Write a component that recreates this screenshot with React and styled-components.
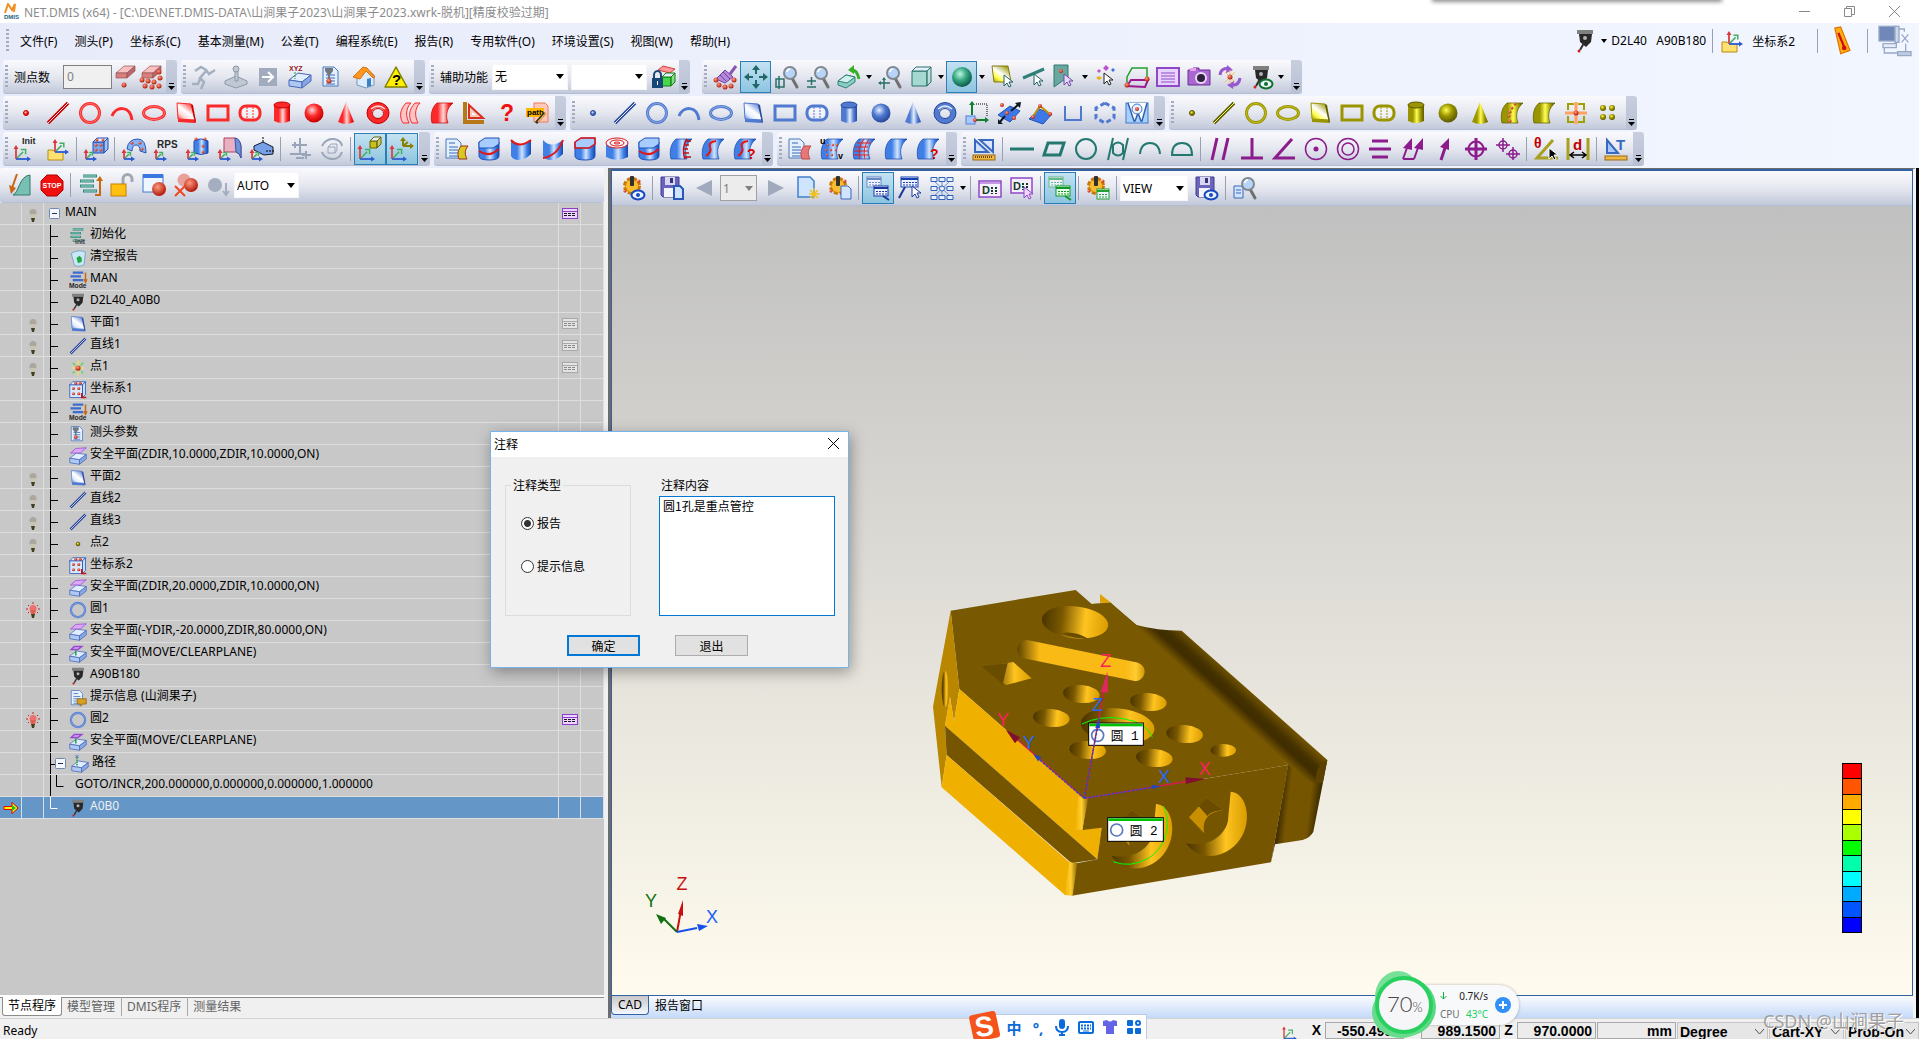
import styled, { createGlobalStyle, css } from "styled-components";
import { useState } from "react";

const GlobalStyle = createGlobalStyle`
  * {
    box-sizing: border-box;
  }
  body {
    margin: 0;
    overflow: hidden;
    font-family: "Noto Sans", "Noto Sans CJK SC", sans-serif;
    font-size: 12px;
    color: #000;
  }
  button, input, select, textarea {
    font-family: inherit;
    font-size: inherit;
    font-weight: inherit;
    color: inherit;
    margin: 0;
  }
`;

// ---------- palettes ----------
const PALETTE = {
  red: { c: "#fb2a2a", d: "#c80000", l: "#ffd8d8" },
  blue: { c: "#5079d0", d: "#28489c", l: "#e4eeff" },
  gold: { c: "#9a9400", d: "#5c5a00", l: "#ffff50" },
  cad: { c: "#3f7fe6", d: "#1548b0", l: "#cfe4ff" },
};

const HiddenSvg = styled.svg`
  display: block;
  flex: none;
`;

const Defs = () => (
  <HiddenSvg width="0" height="0" aria-hidden="true">
    <defs>
      {Object.entries(PALETTE).map(([k, p]) => (
        <g key={k}>
          <linearGradient id={`${k}-h`}>
            <stop offset="0" stopColor={p.c} />
            <stop offset=".3" stopColor={p.c} />
            <stop offset=".55" stopColor={p.l} />
            <stop offset=".8" stopColor={p.c} />
            <stop offset="1" stopColor={p.d} />
          </linearGradient>
          <linearGradient id={`${k}-d`} x1="0" y1="1" x2=".8" y2="0">
            <stop offset="0" stopColor={p.c} />
            <stop offset=".3" stopColor={p.l} />
            <stop offset=".55" stopColor="#fff" />
            <stop offset="1" stopColor={p.c} />
          </linearGradient>
          <radialGradient id={`${k}-r`} cx=".4" cy=".35" r=".65">
            <stop offset="0" stopColor={p.l} />
            <stop offset=".5" stopColor={p.c} />
            <stop offset="1" stopColor={p.d} />
          </radialGradient>
        </g>
      ))}
      <radialGradient id="ball" cx=".4" cy=".35" r=".65">
        <stop offset="0" stopColor="#ff9a80" />
        <stop offset="1" stopColor="#b01808" />
      </radialGradient>
      <radialGradient id="green-r" cx=".4" cy=".35" r=".65">
        <stop offset="0" stopColor="#c0f8e0" />
        <stop offset=".5" stopColor="#38a884" />
        <stop offset="1" stopColor="#0c5c48" />
      </radialGradient>
      <linearGradient id="hole">
        <stop offset="0" stopColor="#4a3400" />
        <stop offset=".3" stopColor="#7a5800" />
        <stop offset=".65" stopColor="#ffc420" />
        <stop offset="1" stopColor="#d89c00" />
      </linearGradient>
      <linearGradient id="slot" gradientUnits="userSpaceOnUse" x1="350" y1="0" x2="735" y2="0">
        <stop offset="0" stopColor="#5a4000" />
        <stop offset=".18" stopColor="#f9ba16" />
        <stop offset=".85" stopColor="#f9ba16" />
        <stop offset=".93" stopColor="#ffcc30" />
        <stop offset="1" stopColor="#d09600" />
      </linearGradient>
      <linearGradient id="slab" gradientUnits="userSpaceOnUse" x1="900" y1="342" x2="960" y2="276">
        <stop offset="0" stopColor="#785800" />
        <stop offset=".35" stopColor="#3f2c00" />
        <stop offset=".6" stopColor="#453200" />
        <stop offset="1" stopColor="#765600" />
      </linearGradient>
      <linearGradient id="side" gradientUnits="userSpaceOnUse" x1="1140" y1="700" x2="1265" y2="715">
        <stop offset="0" stopColor="#3f2c00" />
        <stop offset=".2" stopColor="#755500" />
        <stop offset=".7" stopColor="#755500" />
        <stop offset="1" stopColor="#2c1f00" />
      </linearGradient>
      <linearGradient id="edge">
        <stop offset="0" stopColor="#f0b000" />
        <stop offset=".5" stopColor="#ffcf30" />
        <stop offset="1" stopColor="#8a6400" />
      </linearGradient>
    </defs>
  </HiddenSvg>
);

// ---------- icon parts ----------
const Axes = ({ x = 2, y = 22, s = 10 }) => (
  <g fill="none" strokeWidth="2">
    <path d={`M${x} ${y}l${s * 0.6} ${-s * 0.6}`} stroke="#40b060" strokeWidth="1.5" />
    <path d={`M${x + s * 0.4} ${y - s * 0.8}h${s * 0.4}v${s * 0.4}`} stroke="#40b060" strokeWidth="1.5" />
    <path d={`M${x} ${y}v${-s}`} stroke="#d85050" />
    <path d={`M${x} ${y}h${s}`} stroke="#3a68d0" />
    <path d={`M${x - 2.5} ${y - s + 2}l2.5 -4l2.5 4z`} fill="#d83838" stroke="none" />
    <path d={`M${x + s - 1} ${y - 2.5}l4 2.5l-4 2.5z`} fill="#2858d0" stroke="none" />
  </g>
);
const Dots = ({ pts, r = 2 }) => pts.map(([x, y], i) => <circle key={i} cx={x} cy={y} r={r} fill="url(#ball)" />);
const Cursor = ({ x, y, fill = "#fff", stroke = "#206060" }) => (
  <path d={`M${x} ${y}v11l3 -3l2 4l2 -1l-2 -4h4z`} fill={fill} stroke={stroke} />
);
const Lens = ({ x = 15, y = 8 }) => (
  <g>
    <path d={`M${x + 2} ${y + 5}l5 9`} stroke="#707070" strokeWidth="3" strokeLinecap="round" />
    <circle cx={x} cy={y} r="6" fill="#b8d4f8" stroke="#808890" strokeWidth="2" />
    <path d={`M${x - 3} ${y - 1}a3 3 0 0 1 3 -3`} stroke="#fff" fill="none" strokeWidth="1.5" />
  </g>
);
const Page = ({ x = 3, y = 2 }) => (
  <g>
    <path d={`M${x} ${y}h11l4 4v15h-15z`} fill="#e4f0ff" stroke="#4878b8" />
    <path d={`M${x + 3} ${y + 4}h6M${x + 3} ${y + 8}h9M${x + 3} ${y + 11}h9M${x + 3} ${y + 14}h9M${x + 3} ${y + 17}h9`} stroke="#3868b8" />
  </g>
);
const Disk = () => (
  <g>
    <path d="M1 1h18v20h-16l-2 -2z" fill="#6a64bc" stroke="#443c90" />
    <rect x="5" y="1" width="10" height="8" fill="#d8d8f0" />
    <rect x="10" y="2" width="3" height="5" fill="#38307c" />
    <rect x="4" y="12" width="11" height="9" fill="#f4f4fc" />
  </g>
);
const Gear = () => (
  <g>
    <circle cx="10" cy="10" r="7.5" fill="#f0a818" stroke="#c87808" strokeWidth="3" strokeDasharray="4 2" />
    <circle cx="10" cy="10" r="6" fill="#f8bc30" />
    <rect x="8" y="0" width="4" height="10" rx="1" fill="#303030" />
    <Dots pts={[[3, 15], [17, 5]]} r={1.5} />
  </g>
);
const Eye = ({ x = 16, y = 18, c = "#1848c0" }) => (
  <g>
    <ellipse cx={x} cy={y} rx="6.5" ry="4.5" fill="#e8f4ff" stroke={c} strokeWidth="2" />
    <circle cx={x} cy={y} r="2" fill={c} />
  </g>
);
const Grid = ({ x, y, c = "#1840b0", w = 14, fill = "#eef2ff" }) => (
  <g>
    <rect x={x} y={y} width={w} height="10" fill={fill} stroke={c} />
    <path d={`M${x} ${y + 2}h${w}`} stroke={c} strokeWidth="2" />
    <path d={`M${x + 2} ${y + 5.5}h${w - 3}M${x + 2} ${y + 8}h${w - 3}`} stroke={c} strokeDasharray="2 1" />
  </g>
);
const Question = () => (
  <text x="14" y="22" fontSize="14" fontWeight="700" fontFamily="Liberation Sans, sans-serif" fill="#d80000">?</text>
);
const Tube = ({ children }) => (
  <g>
    <path d="M2 5v14q0 4 10 4t10 -4v-14z" fill="url(#cad-h)" stroke="#1c50b8" />
    <path d="M2 5l6 -4h14v6l-6 4h-14z" fill="#a8ccff" stroke="#1c50b8" />
    {children}
  </g>
);
const Shell = ({ children, k = "cad" }) => (
  <g>
    <path d="M7 2h16c-6 5 -8 12 -5 20h-16c-2 -8 0 -16 5 -20z" fill={`url(#${k}-h)`} stroke={PALETTE[k].d} strokeWidth=".7" />
    {children}
  </g>
);
const Eraser = ({ y = 0 }) => (
  <g stroke="#985050" strokeWidth=".7">
    <path d={`M3 ${y + 8}l8 -7h11l-8 7z`} fill="#f8c0c0" />
    <path d={`M3 ${y + 8}h11v5h-11z`} fill="#d88080" />
    <path d={`M14 ${y + 8}l8 -7v5l-8 7z`} fill="#b86868" />
  </g>
);
const Box = ({ x = 8, y = 2, s = 10, c = "#78a8f0", d = "#1c50b8" }) => (
  <g stroke={d}>
    <path d={`M${x} ${y + 4}h${s}v${s}h${-s}z`} fill={c} />
    <path d={`M${x} ${y + 4}l4 -4h${s}l-4 4z`} fill="#e4f0ff" />
    <path d={`M${x + s} ${y + 4}l4 -4v${s}l-4 4z`} fill={c} fillOpacity=".6" />
  </g>
);
const Probe = () => (
  <g>
    <path d="M4 1h16v4h-16z" fill="#808080" />
    <path d="M6 5h13l-1 8l-5 5l-6 -5z" fill="#282828" />
    <circle cx="12" cy="9" r="2" fill="#b0b0b0" />
    <path d="M11 14l-4 7" stroke="#303030" strokeWidth="2" />
    <circle cx="6" cy="22" r="1.5" fill="#d02020" />
  </g>
);
const Slab = () => (
  <g stroke="#4868b8">
    <path d="M1 15l9 -7l13 2l-9 7z" fill="#e0ecff" />
    <path d="M1 15l13 2v6l-13 -2z" fill="#b0c8f4" />
    <path d="M14 17l9 -7v6l-9 7z" fill="#88a8e4" />
  </g>
);
const Bars = ({ c = "#2c8878" }) => (
  <g>
    <path d="M5 3h14M2 8h14M2 13h14M5 18h14" stroke={c} strokeWidth="3" />
    <path d="M5 3h13M3 8h12M3 13h12M6 18h12" stroke="#a8dcd0" />
  </g>
);
const word = (t, x, y, size, fill) => (
  <text x={x} y={y} fontSize={size} fontWeight="700" fontFamily="Liberation Sans, sans-serif" fill={fill}>{t}</text>
);

const G = "#247870";
const V = "#8c1c8c";

// ---------- icons, all on a 24 x 24 grid ----------
const ICONS = {
  point: (p, k) => <circle cx="12" cy="12" r="2.5" fill={`url(#${k}-r)`} stroke={p.d} />,
  line: (p) => (
    <g>
      <path d="M2 22L22 2" stroke={p.d} strokeWidth="3.5" />
      <path d="M2 22L22 2" stroke={p.l} strokeWidth="1" />
    </g>
  ),
  circle: (p) => (
    <g fill="none">
      <circle cx="12" cy="12" r="9.5" stroke={p.c} strokeWidth="3" />
      <circle cx="12" cy="12" r="9.5" stroke={p.l} strokeWidth=".7" strokeOpacity=".6" />
    </g>
  ),
  arc: (p) => <path d="M2 15C6 5 20 4 22 19" fill="none" stroke={p.c} strokeWidth="3" />,
  ellipse: (p) => (
    <g fill="none">
      <ellipse cx="12" cy="12" rx="10.5" ry="6.5" stroke={p.c} strokeWidth="3" />
      <ellipse cx="12" cy="12" rx="10.5" ry="6.5" stroke={p.l} strokeWidth=".7" strokeOpacity=".6" />
    </g>
  ),
  plane: (p, k) => (
    <g>
      <path d="M3 2l14 1l4 16l-17 -1z" fill={`url(#${k}-d)`} stroke={p.c} />
      <path d="M4 18l17 1v3l-17 -1z" fill={p.c} />
      <path d="M17 3l2 1l3 17l-1 1z" fill={p.d} />
    </g>
  ),
  rect: (p) => <rect x="2" y="5" width="20" height="14" fill="none" stroke={p.c} strokeWidth="3" />,
  slot: (p) => (
    <g fill="none" stroke={p.c}>
      <rect x="2" y="5" width="20" height="14" rx="6" strokeWidth="3" fill="#fff" fillOpacity=".5" />
      <path d="M9 6v12M15 6v12" strokeDasharray="2 1" />
    </g>
  ),
  cylinder: (p, k) => (
    <g>
      <path d="M4 4v16q8 4 16 0v-16z" fill={`url(#${k}-h)`} />
      <ellipse cx="12" cy="4" rx="8" ry="3" fill={p.c} stroke={p.d} />
    </g>
  ),
  sphere: (p, k) => <circle cx="12" cy="12" r="9.5" fill={`url(#${k}-r)`} />,
  cone: (p, k) => <path d="M12 1L4 21q8 4 16 0z" fill={`url(#${k}-h)`} />,
  torus: (p) => (
    <g fill="none">
      <ellipse cx="12" cy="12" rx="8.5" ry="8" stroke={p.c} strokeWidth="5" />
      <ellipse cx="12" cy="12" rx="11" ry="10.5" stroke={p.d} />
      <ellipse cx="12" cy="12.5" rx="5.5" ry="5" stroke={p.d} />
      <path d="M5 8q7 -6 14 0" stroke={p.l} strokeWidth="1.5" />
    </g>
  ),
  strips: (p) => (
    <g fill="#ffc4c4" stroke={p.c}>
      <path d="M8 2h5c-6 6 -5 14 -2 20h-6c-4 -6 -3 -14 3 -20z" />
      <path d="M17 2h5c-6 6 -5 14 -2 20h-6c-4 -6 -3 -14 3 -20z" />
    </g>
  ),
  surface: (p, k) => <Shell k={k} />,
  surfaceDots: (p, k) => (
    <Shell k={k}>
      <Dots pts={[[15, 3], [12, 7], [10, 11], [9, 15], [10, 20]]} r={1.5} />
    </Shell>
  ),
  squareTool: () => (
    <g>
      <path d="M3 1v20h19" fill="none" stroke="#b87818" strokeWidth="4" />
      <path d="M7 4v13h14z" fill="#f8c8b8" stroke="#d83020" strokeWidth="2" />
      <path d="M10 11v3h4z" fill="#fff" />
    </g>
  ),
  help: () => word("?", 6, 20, 23, "#f01010"),
  path: () => (
    <g>
      <path d="M8 2h11l3 3v16h-14z" fill="#ffc8b8" stroke="#f07858" />
      <rect x="0" y="7" width="18" height="9" fill="#ffb800" />
      {word("path", 1, 14, 8, "#000")}
      <path d="M10 22l9 -10" stroke="#303030" strokeWidth="3" />
      <path d="M12 21l8 -9" stroke="#f0b040" strokeWidth="1.5" />
    </g>
  ),
  axisBox: () => (
    <g>
      <rect x="1" y="15" width="9" height="8" fill="#a8c8ff" stroke="#5080d8" />
      <path d="M7 1v13M11 19h11" stroke="#108030" strokeWidth="2" />
      <path d="M4 4l3 -4l3 4zM20 16l4 3l-4 3z" fill="#108030" />
      <path d="M11 3h11v12" fill="none" stroke="#000" strokeDasharray="1 1" />
      <Dots pts={[[10, 19]]} />
    </g>
  ),
  flatA: () => (
    <g>
      <path d="M1 14l12 -9l10 5l-10 11z" fill="#3c78e8" stroke="#2050b8" />
      <path d="M14 10l8 -7M8 15l-6 7" stroke="#101828" strokeWidth="2" />
      <path d="M18 2l6 -1l-1 6zM1 18v5h5z" fill="#101828" />
      <Dots pts={[[5, 4], [10, 12], [17, 17]]} />
    </g>
  ),
  flatB: () => (
    <g>
      <path d="M0 18l10 -10l13 5l-9 10z" fill="#3c78e8" stroke="#2050b8" />
      <path d="M3 17l8 -12l11 9" fill="none" stroke="#c09000" strokeWidth="2" />
      <Dots pts={[[4, 16], [11, 5], [21, 13]]} />
    </g>
  ),
  groove: (p) => <path d="M4 5v14h16v-14" fill="none" stroke={p.c} strokeWidth="2" />,
  hex: (p) => <path d="M12 2l9 5v10l-9 5l-9 -5v-10z" fill="none" stroke={p.c} strokeWidth="3" strokeDasharray="5 3" />,
  funnel: () => (
    <g>
      <rect x="1" y="2" width="22" height="20" fill="#a8d0ff" stroke="#4078c8" />
      <path d="M3 2l6 18h1l3 -8l3 8h1l5 -18" fill="#fff" stroke="#3060b0" strokeWidth="1.5" />
      <circle cx="12" cy="8" r="5" fill="#e8f0ff" stroke="#4078c8" />
      <Dots pts={[[12, 8]]} />
    </g>
  ),
  cross: () => (
    <g fill="none">
      <path d="M4 9v-6h6M14 3h6v6M20 15v6h-6M10 21h-6v-6" stroke="#a0a000" strokeWidth="2" />
      <path d="M12 1v22M1 12h22" stroke="#ffa060" strokeWidth="3" />
      <Dots pts={[[12, 12]]} r={2.5} />
    </g>
  ),
  fourDots: (p, k) => [[7, 7], [16, 7], [7, 16], [16, 16]].map(([x, y]) => <circle key={x + "-" + y} cx={x} cy={y} r="3" fill={`url(#${k}-r)`} />),
  erase: () => (
    <g>
      <Eraser />
      <Dots pts={[[11, 20]]} r={2.5} />
    </g>
  ),
  eraseAll: () => (
    <g>
      <Eraser />
      <Dots pts={[[3, 15], [9, 16], [20, 7], [21, 13], [15, 17], [6, 21], [13, 22], [20, 21]]} r={2.5} />
    </g>
  ),
  runner: () => (
    <g fill="none" stroke="#a4b0c0" strokeWidth="2.5">
      <path d="M3 6l6 -4l5 3l3 4l6 -4M14 6l-6 7l4 4l-3 7M8 14l-2 5h-6" />
    </g>
  ),
  joystick: () => (
    <g fill="#c0c8d4" stroke="#8c98a8">
      <path d="M1 16l11 -5l11 5v3l-11 4l-11 -4z" />
      <path d="M11 5h3v11h-3z" />
      <circle cx="12" cy="4" r="3" />
    </g>
  ),
  next: () => (
    <g>
      <rect x="3" y="3" width="18" height="18" fill="#a0acbe" />
      <path d="M6 12h11M12 7l5 5l-5 5" stroke="#fff" strokeWidth="2" fill="none" />
    </g>
  ),
  xyz: () => (
    <g>
      <Slab />
      {word("XYZ", 1, 6, 7, "#901818")}
      <path d="M7 7v7" stroke="#20a020" strokeDasharray="2 1" />
    </g>
  ),
  report: () => (
    <g>
      <Page />
      <path d="M5 3h8v3l-3 4v5h-2v-5l-3 -4z" fill="#707880" />
      <Dots pts={[[9, 16]]} r={2.5} />
    </g>
  ),
  home: () => (
    <g>
      <path d="M5 11v9l9 3l8 -3v-10l-8 -6z" fill="#dcecfc" stroke="#7898b8" />
      <path d="M1 12l10 -10l4 1l8 9l-2 1l-7 -7l-6 8z" fill="#ff9820" stroke="#d87010" />
      <path d="M15 14l4 -1v8l-4 1z" fill="#3c80c8" />
    </g>
  ),
  warning: () => (
    <g>
      <path d="M12 2L23 22H1z" fill="#ffee00" stroke="#808000" strokeLinejoin="round" strokeWidth="1.5" />
      {word("?", 8, 20, 15, "#000")}
    </g>
  ),
  lock: () => (
    <g>
      <path d="M6 5l5 -4l12 3l-5 4z" fill="#ff9898" stroke="#d04040" />
      <Box x={10} y={8} s={9} c="#48d848" d="#108010" />
      <path d="M2 14v-4a3.5 4 0 0 1 7 0v4" stroke="#184878" strokeWidth="2" fill="none" />
      <rect x="0" y="13" width="11" height="10" fill="#184878" />
      <rect x="5" y="16" width="1" height="4" fill="#fff" />
    </g>
  ),
  broom: () => (
    <g>
      <path d="M23 1l-6 8" stroke="#8858b0" strokeWidth="3" />
      <path d="M12 5l8 7l-8 6l-9 -4z" fill="#b888dc" stroke="#7040a0" />
      <path d="M10 7l7 7M7 10l6 6" stroke="#7040a0" />
      <Dots pts={[[3, 15], [6, 20], [12, 22], [18, 21], [21, 15]]} r={2.5} />
    </g>
  ),
  move: () => (
    <path d="M12 0l4 5h-3v4h-2v-4h-3zM12 24l4 -5h-3v-4h-2v4h-3zM0 12l5 -4v3h4v2h-4v3zM24 12l-5 -4v3h-4v2h4v3z" fill="#206868" />
  ),
  zoomRect: () => (
    <g>
      <Lens />
      <path d="M1 14h8v8h-8zM4 11v13" stroke="#287068" strokeWidth="1.5" fill="none" />
    </g>
  ),
  zoomPlus: () => (
    <g>
      <Lens />
      <path d="M1 16h9M5.5 12v8M1 22h9" stroke="#287068" strokeWidth="1.5" />
    </g>
  ),
  rotate: () => (
    <g>
      <path d="M1 16l8 -6l9 2v5l-9 6l-8 -3z" fill="#88ccc4" stroke="#308078" />
      <path d="M1 16l8 -6l9 2l-8 6z" fill="#d0f0ec" stroke="#308078" />
      <path d="M14 5q6 -1 8 9" fill="none" stroke="#38b028" strokeWidth="3" />
      <path d="M11 5l6 -5v9z" fill="#38b028" />
    </g>
  ),
  zoomMove: () => (
    <g>
      <Lens />
      <path d="M1 18h11M6 13v11" stroke="#287068" strokeWidth="1.5" />
      <path d="M4 15l2 -3l2 3zM3 16l-3 2l3 2z" fill="#287068" />
    </g>
  ),
  cube: () => <Box x={3} y={2} s={15} c="#a4d8d0" d="#287068" />,
  shade: () => <circle cx="12" cy="12" r="10" fill="url(#green-r)" />,
  pickFace: () => (
    <g>
      <path d="M1 1h16l3 16h-17z" fill="url(#gold-d)" stroke="#807c10" />
      <Cursor x={13} y={10} />
    </g>
  ),
  pickEdge: () => (
    <g>
      <path d="M1 13L22 4" stroke="#308078" strokeWidth="3" />
      <Cursor x={12} y={9} />
    </g>
  ),
  pickPoint: () => (
    <g>
      <path d="M1 0h14v12l-14 10z" fill="#68a8a0" stroke="#307870" />
      <Dots pts={[[8, 6]]} />
      <Cursor x={11} y={9} fill="#e8d8ff" stroke="#7048a0" />
    </g>
  ),
  pickAny: () => (
    <g>
      <Cursor x={10} y={8} stroke="#202020" />
      <path d="M12 0l3 3l-3 3l-3 -3zM5 4l2 2l-2 2l-2 -2z" fill="#c050d0" />
      <path d="M19 3l2 2l-2 2l-2 -2z" fill="#4070e0" />
      <path d="M5 11l3 2l-3 2l-3 -2z" fill="#e8b020" />
    </g>
  ),
  frame: () => (
    <g fill="none">
      <path d="M2 21v-9l5 -9h15v9" stroke="#20a030" strokeWidth="1.5" />
      <path d="M2 21l4 -6h17l-3 7z" stroke="#a01890" strokeWidth="2" />
      <Dots pts={[[2, 20], [22, 14]]} r={2.5} />
    </g>
  ),
  listBox: () => (
    <g>
      <rect x="1" y="3" width="22" height="18" fill="#e8d4ff" stroke="#9048c8" strokeWidth="2" />
      <path d="M5 8h14M5 11h14M5 14h14M5 17h14" stroke="#9048c8" />
    </g>
  ),
  camera: () => (
    <g>
      <path d="M1 5h5v-2h6v2h11v15h-22z" fill="#a868d0" stroke="#6c2c98" />
      <rect x="3" y="3" width="6" height="3" fill="#e8a0f0" />
      <circle cx="14" cy="13" r="6" fill="#e8d8f4" />
      <circle cx="14" cy="13" r="4" fill="#302040" />
    </g>
  ),
  spinXY: () => (
    <g fill="none">
      <path d="M2 10q1 -8 10 -6M22 13q-1 8 -9 7" stroke="#9858d0" strokeWidth="3" />
      <path d="M9 0l6 5l-7 3zM15 24l-6 -4l7 -4z" fill="#9858d0" />
      <path d="M7 7l10 10M17 7l-10 10M12 5v14" stroke="#f8c060" />
      <Dots pts={[[12, 12]]} r={2.5} />
    </g>
  ),
  probeEye: () => (
    <g>
      <Probe />
      <Eye x={17} y={19} c="#107028" />
    </g>
  ),
  probe: () => <Probe />,
  axes: () => <Axes x={4} s={14} />,
  init: () => (
    <g>
      <Axes s={12} />
      {word("Init", 8, 7, 9, "#282828")}
    </g>
  ),
  csOpen: () => (
    <g>
      <path d="M2 23v-10h5l2 2h8v8z" fill="#ffe070" stroke="#b88c10" />
      <Axes x={9} y={15} s={11} />
    </g>
  ),
  csBox: () => (
    <g>
      <Box x={9} y={1} s={11} />
      <Dots pts={[[13, 3], [19, 3], [12, 8], [17, 8], [12, 13], [17, 13]]} r={1.5} />
      <Axes s={8} />
    </g>
  ),
  csArc: () => (
    <g>
      <path d="M5 12q1 -10 11 -10q8 0 8 14l-6 -2q0 -6 -4 -6t-4 6z" fill="#88b4f4" stroke="#2858b8" />
      <Dots pts={[[10, 6], [18, 6], [20, 12]]} r={1.5} />
      <Axes s={8} />
    </g>
  ),
  rps: () => (
    <g>
      <Axes s={8} />
      {word("RPS", 3, 11, 10, "#282828")}
    </g>
  ),
  csCyl: () => (
    <g>
      <path d="M8 4q6 -4 14 0v12q-7 3 -14 0z" fill="url(#cad-h)" stroke="#1c50b8" />
      <Dots pts={[[10, 2], [19, 2], [17, 9], [17, 15]]} r={1.5} />
      <Axes s={8} />
    </g>
  ),
  csHalf: () => (
    <g>
      <path d="M6 1h11q5 1 6 8v12q-1 -5 -5 -6h-12z" fill="#e8b0c0" stroke="#b04060" />
      <path d="M17 1q5 1 6 8v12q-1 -5 -5 -6z" fill="#7090d8" stroke="#3058b0" />
      <Axes s={8} />
    </g>
  ),
  csPlate: () => (
    <g>
      <path d="M4 9l9 -4l10 5v7l-9 1l-10 -5z" fill="#78a0e8" stroke="#101828" />
      <path d="M13 0v6M16 14h8" stroke="#000" strokeDasharray="2 1" />
      <Axes s={8} />
    </g>
  ),
  csScale: () => <path d="M12 1v15M4 8h15M2 17h16M8 21h8M18 14v8M14 18h9M7 5v6" stroke="#98a4b8" strokeWidth="2" fill="none" />,
  csSpin: () => (
    <g fill="none" stroke="#98a4b8" strokeWidth="2">
      <path d="M2 9q4 -8 12 -7q7 1 8 7M22 15q-3 8 -11 7q-7 -1 -9 -7" />
      <path d="M8 10h7v6h-7zM8 10l3 -3h6v6l-2 3" strokeWidth="1" />
    </g>
  ),
  csView: () => (
    <g>
      <Axes s={12} />
      <Box x={12} y={0} s={7} c="#c8c020" d="#686400" />
    </g>
  ),
  csView2: () => (
    <g>
      <Axes s={12} />
      <path d="M13 9v-7M13 9h8M13 9l5 -4" stroke="#888000" strokeWidth="2" />
      <path d="M10 4l3 -4l3 4zM20 6l4 3l-4 3z" fill="#888000" />
    </g>
  ),
  cadReport: (p, k) => (
    <g>
      <Page x={1} />
      <path d="M16 9h7c-4 5 -3 9 -1 13h-8c-2 -5 -1 -9 2 -13z" fill={k === "gold" ? "#d8c820" : "#e87878"} stroke={k === "gold" ? "#a03010" : "#c04848"} />
    </g>
  ),
  cad1: () => <Tube><path d="M2 14q7 5 14 2l6 -4" fill="none" stroke="#e01818" strokeWidth="2" /></Tube>,
  cad2: () => (
    <g>
      <path d="M2 3q8 9 20 0v14q-6 6 -12 6t-8 -4z" fill="url(#cad-h)" />
      <path d="M2 3q8 9 20 0" fill="none" stroke="#e01818" strokeWidth="2" />
    </g>
  ),
  cad3: () => (
    <g>
      <path d="M2 3q8 9 20 0v14q-6 6 -12 6t-8 -4z" fill="url(#cad-h)" />
      <path d="M2 21q14 -2 20 -18" fill="none" stroke="#e01818" strokeWidth="2" />
    </g>
  ),
  cad4: () => <Tube><path d="M2 5l6 -4h14v6l-6 4h-14z" fill="none" stroke="#e01818" strokeWidth="1.5" /></Tube>,
  cad5: () => (
    <g>
      <path d="M1 6v14q11 6 22 0v-14z" fill="url(#cad-h)" />
      <ellipse cx="12" cy="6" rx="11" ry="5" fill="#f4f8ff" stroke="#e01818" />
      <ellipse cx="12" cy="6" rx="7" ry="3" fill="none" stroke="#e01818" />
      <ellipse cx="12" cy="6" rx="3" ry="1" fill="none" stroke="#e01818" />
    </g>
  ),
  cad7: () => <Shell><path d="M18 2q-6 9 -2 20M16 4h6M15 8h5M14 12h5M14 16h6M15 20h7" stroke="#c01010" strokeWidth="1.5" fill="none" /></Shell>,
  cad8: () => <Shell><path d="M15 4q-8 1 -6 6t-4 9" fill="none" stroke="#e01818" strokeWidth="2" /></Shell>,
  cad9: () => <Shell><path d="M15 4q-8 1 -6 6t-4 9" fill="none" stroke="#e01818" strokeWidth="2" /><Question /></Shell>,
  uv: () => (
    <Shell>
      <Dots pts={[[8, 8], [13, 8], [17, 8], [6, 13], [11, 13], [16, 13], [7, 18], [12, 18]]} r={1.2} />
      {word("u", 0, 7, 9, "#000")}
      {word("v", 18, 22, 9, "#000")}
    </Shell>
  ),
  mesh: () => <Shell><path d="M5 6h14M3 10h13M2 14h14M2 18h15M12 2q-7 9 -4 20M17 2q-7 9 -4 20" stroke="#e02020" fill="none" /></Shell>,
  shell: () => <Shell />,
  shellQ: () => <Shell><Question /></Shell>,
  ruler: () => (
    <g>
      <path d="M3 3v12h13z" fill="#d0e0ff" stroke="#3868c0" strokeWidth="2" />
      <path d="M8 3h13v12z" fill="#d0e0ff" fillOpacity=".6" stroke="#3868c0" strokeWidth="2" />
      <rect x="1" y="18" width="22" height="5" fill="#f0b840" stroke="#986818" />
      <path d="M3 20h18" stroke="#704808" strokeDasharray="1 1" strokeWidth="2" />
    </g>
  ),
  rulerT: () => (
    <g>
      <path d="M3 3l11 13h-11z" fill="#a8c8ff" stroke="#3868c0" strokeWidth="2" />
      {word("T", 12, 13, 15, "#3868c0")}
      <rect x="1" y="19" width="22" height="4" fill="#f0b840" stroke="#986818" />
    </g>
  ),
  straight: () => <path d="M0 12h24" stroke={G} strokeWidth="3" />,
  flat: () => <path d="M6 6h16l-4 12h-16z" fill="none" stroke={G} strokeWidth="3" />,
  round: () => <circle cx="12" cy="12" r="10" fill="none" stroke={G} strokeWidth="2" />,
  cylindric: () => <path d="M7 1l-5 22M22 1l-5 22M7 8q5 -5 10 0v8q-5 5 -10 0z" fill="none" stroke={G} strokeWidth="2" />,
  profileL: () => <path d="M2 17q1 -11 10 -11t10 11" fill="none" stroke={G} strokeWidth="2" />,
  profileS: () => <path d="M2 18q0 -12 10 -12t10 12z" fill="none" stroke={G} strokeWidth="2" />,
  parallel: () => <path d="M9 1l-5 22M20 1l-5 22" stroke={V} strokeWidth="3" />,
  perp: () => <path d="M1 21h22M12 1v20" stroke={V} strokeWidth="3" />,
  angle: () => <path d="M20 2l-17 19h20" fill="none" stroke={V} strokeWidth="3" />,
  concentric: () => (
    <g>
      <circle cx="12" cy="12" r="10.5" fill="none" stroke={V} strokeWidth="1.5" />
      <circle cx="12" cy="12" r="2.5" fill={V} />
    </g>
  ),
  coaxial: () => (
    <g fill="none" stroke={V} strokeWidth="1.5">
      <circle cx="12" cy="12" r="10.5" />
      <circle cx="12" cy="12" r="6" />
    </g>
  ),
  symmetry: () => <path d="M4 4h16M1 12h22M4 20h16" stroke={V} strokeWidth="3" />,
  runout2: () => (
    <g>
      <path d="M3 22l5 -14M14 22l5 -14M3 22h11" stroke={V} strokeWidth="2" />
      <path d="M3 11l9 -10v12zM14 11l9 -10v12z" fill={V} />
    </g>
  ),
  runout: () => (
    <g>
      <path d="M9 23l5 -15" stroke={V} strokeWidth="3" />
      <path d="M8 10l9 -9v12z" fill={V} />
    </g>
  ),
  position: () => (
    <g fill="none" stroke={V} strokeWidth="3">
      <circle cx="12" cy="12" r="7.5" strokeWidth="2" />
      <path d="M12 1v22M1 12h22" />
    </g>
  ),
  positions: () => (
    <g fill="none" stroke={V} strokeWidth="1.5">
      <circle cx="7" cy="8" r="4" />
      <path d="M7 1v14M0 8h14M17 10v13M10 17h14" />
      <circle cx="17" cy="17" r="4" />
    </g>
  ),
  theta: () => (
    <g>
      <path d="M19 3l-16 18h21" fill="none" stroke="#a8a020" strokeWidth="3" />
      {word("θ", 0, 11, 14, "#c00000")}
      <Cursor x={15} y={11} fill="#000" stroke="#fff" />
    </g>
  ),
  dist: () => (
    <g>
      <path d="M2 1v22M22 1v22" stroke="#a8a020" strokeWidth="3" />
      {word("d", 7, 13, 15, "#c00000")}
      <path d="M5 18h14M8 15l-4 3l4 3M16 15l4 3l-4 3" stroke="#000" fill="none" strokeWidth="1.5" />
    </g>
  ),
  exec: () => (
    <g>
      <path d="M5 22c6 -2 6 -19 17 -20v20z" fill="#78c0b4" stroke="#307868" />
      <path d="M9 1l-5 14" stroke="#c86810" strokeWidth="2" />
      <path d="M1 12l2 9l5 -6z" fill="#c86810" />
    </g>
  ),
  stop: () => (
    <g>
      <path d="M7 2h10l6 6v9l-6 6h-10l-6 -6v-9z" fill="#f01010" stroke="#b00000" />
      <text x="12" y="15" textAnchor="middle" fontSize="7" fontWeight="700" fill="#fff" fontFamily="Liberation Sans, sans-serif">STOP</text>
    </g>
  ),
  steps: () => (
    <g>
      <Bars />
      <path d="M17 22h5v-16" stroke="#c86810" strokeWidth="2" fill="none" />
      <path d="M18 8l4 -5l3 5z" fill="#c86810" />
    </g>
  ),
  unlock: () => (
    <g>
      <path d="M13 11v-5a4.5 4.5 0 0 1 9 0v3" stroke="#a0a8b0" strokeWidth="3" fill="none" />
      <rect x="1" y="11" width="15" height="12" fill="#ffc010" stroke="#c88000" />
    </g>
  ),
  winBall: () => (
    <g>
      <rect x="1" y="2" width="20" height="17" fill="#f0f6ff" stroke="#4078d0" />
      <rect x="1" y="1" width="20" height="4" fill="#3878e0" />
      <circle cx="17" cy="16" r="7" fill="url(#ball)" />
    </g>
  ),
  ballDel: () => (
    <g>
      <circle cx="10" cy="7" r="6.5" fill="#e8a098" />
      <circle cx="17" cy="12" r="7" fill="url(#ball)" />
      <path d="M1 13l10 10M11 13l-10 10" stroke="#f04820" strokeWidth="2" />
    </g>
  ),
  ballDown: () => (
    <g>
      <circle cx="9" cy="12" r="7" fill="#a4aec0" />
      <path d="M20 10v11M17 18l3 4l3 -4" stroke="#a4aec0" strokeWidth="2" fill="none" />
    </g>
  ),
  gearEye: () => <g><Gear /><Eye y={19} /></g>,
  gearPage: () => <g><Gear /><path d="M13 10h7l3 3v10h-10z" fill="#d0e4ff" stroke="#3868b8" /></g>,
  gearGrid: () => <g><Gear /><Grid x={11} y={13} w={12} c="#20a030" /></g>,
  diskPage: () => <g><Disk /><path d="M14 10h6l3 3v10h-9z" fill="#d0e4ff" stroke="#2858b8" strokeWidth="2" /></g>,
  diskEye: () => <g><Disk /><Eye y={19} /></g>,
  prev: () => <path d="M20 4v16l-16 -8z" fill="#a0aabc" />,
  fwd: () => <path d="M4 4v16l16 -8z" fill="#a0aabc" />,
  newPage: () => (
    <g>
      <path d="M2 1h12l4 4v16h-16z" fill="#cfe4ff" stroke="#4080d0" strokeWidth="1.5" />
      <path d="M18 12v11M13 18h11M14 14l8 8M22 14l-8 8" stroke="#f0c020" strokeWidth="1.5" />
    </g>
  ),
  grids: () => <g><Grid x={1} y={1} c="#6888c8" /><Grid x={8} y={10} c="#1838a0" /><path d="M17 20l6 4" stroke="#1838a0" strokeWidth="2" /></g>,
  gridCursor: () => <g><Grid x={3} y={1} w={17} /><path d="M1 22l6 -11" stroke="#1838a0" strokeWidth="2" /><Cursor x={14} y={10} stroke="#1838a0" /></g>,
  gridStar: () => (
    <g fill="#e8f0ff" stroke="#3060b8">
      <path d="M4 5l16 15M20 5l-16 15M12 4v18M4 12h16" stroke="#6890d0" />
      <path d="M1 1.5h6v4h-6zM9 1.5h6v4h-6zM17 1.5h6v4h-6zM1 10.5h6v4h-6zM17 10.5h6v4h-6zM1 19.5h6v4h-6zM9 19.5h6v4h-6zM17 19.5h6v4h-6z" />
      <circle cx="12" cy="12.5" r="2.5" />
    </g>
  ),
  dTable: () => <g><rect x="1" y="5" width="22" height="16" fill="#f8eeff" stroke="#9048c8" strokeWidth="1.5" /><path d="M1 7h22" stroke="#9048c8" />{word("D", 4, 18, 11, "#104020")}<path d="M14 11v7M18 11v7" stroke="#104020" strokeDasharray="2 1" strokeWidth="2" /></g>,
  dTableCursor: () => <g><rect x="1" y="2" width="21" height="15" fill="#f8eeff" stroke="#9048c8" strokeWidth="1.5" />{word("D", 3, 14, 11, "#104020")}<path d="M13 7v7M17 7v7" stroke="#104020" strokeDasharray="2 1" strokeWidth="2" /><Cursor x={14} y={11} fill="#f0d8ff" stroke="#9048c8" /></g>,
  gridsGreen: () => <g><Grid x={1} y={1} c="#68b888" /><Grid x={8} y={10} c="#109828" fill="#e8ffe8" /><path d="M17 20l6 4" stroke="#109828" strokeWidth="2" /></g>,
  pageLens: () => <g><path d="M1 10h7l2 2v10h-9z" fill="#d0e4ff" stroke="#3868b8" /><path d="M3 14h5M3 17h5" stroke="#3868b8" /><Lens /></g>,
  thermo: () => <g><path d="M5 1l5 -1l8 20l-8 3z" fill="#ffb010" stroke="#e07000" /><path d="M8 5l5 12" stroke="#d01010" strokeWidth="2" /><circle cx="13" cy="18" r="2" fill="#d01010" /></g>,
  computer: () => (
    <g stroke="#98a8c8">
      <rect x="0" y="1" width="12" height="11" fill="#7088b8" />
      <rect x="12" y="1" width="3" height="12" fill="#d0d8e8" />
      <path d="M3 14h10v3h-10z" fill="#e8ecf4" />
      <path d="M17 7l5 6M22 7l-5 6M19 5v-2h-4M20 14v6M4 17v4h10" fill="none" />
      <path d="M14 20h10v3h-10z" fill="#c0cce0" />
    </g>
  ),
  tInit: () => <g><Bars />{word("Init", 8, 23, 9, "#404040")}</g>,
  tBin: () => <g><path d="M3 6q9 -6 19 -2l-2 17q-8 4 -13 0z" fill="#c8e8f8" stroke="#6898b8" /><path d="M10 12l4 -3l3 3v5l-5 2z" fill="#20a840" /></g>,
  tMode: () => <g><path d="M5 2h14M2 7h14M5 12h14" stroke="#3c6cd0" strokeWidth="3" /><path d="M22 2v12M20 11l2 4l2 -4" stroke="#c86810" strokeWidth="2" fill="none" />{word("Mode", 0, 23, 9, "#282828")}</g>,
  tStar: () => <g><path d="M12 2v20M4 12h16" stroke="#f0e060" strokeWidth="2" /><path d="M5 5l14 14M19 5l-14 14" stroke="#60d860" strokeWidth="2" strokeDasharray="5 3" /><Dots pts={[[12, 12]]} r={3.5} /></g>,
  tCs: () => <g><Box x={1} y={1} s={17} c="#d8e8ff" /><Dots pts={[[9, 3], [15, 3], [6, 10], [13, 10], [6, 17], [13, 17]]} /><path d="M17 16v6h6" stroke="#c81010" strokeWidth="2" fill="none" /></g>,
  tSafe: () => <g><Slab /><path d="M2 8l7 -6l14 -1l-8 7z" fill="#dca8f8" stroke="#9848d0" /></g>,
  tSafeMove: () => <g><Slab /><path d="M3 6l4 -4h10l-5 4z" fill="#dca8f8" stroke="#9848d0" strokeWidth="2" /><path d="M9 7v7" stroke="#20a040" strokeWidth="2" /></g>,
  tNote: () => <g><Page /><path d="M11 13h12v7h-5l-3 3v-3h-4z" fill="#d8a020" stroke="#906010" /></g>,
  tRoute: () => <g><Slab /><path d="M8 3v11" stroke="#20a040" strokeWidth="2" strokeDasharray="2 1" /><path d="M6 0l4 4M10 0l-4 4" stroke="#3060c0" /></g>,
};

const IconSvg = styled.svg`
  display: block;
  flex: none;
  overflow: visible;
`;

// the name may carry a palette: "circle:red"
const Icon = ({ name, size = 24 }) => {
  const [id, k = "blue"] = name.split(":");
  return (
    <IconSvg width={size} height={size} viewBox="0 0 24 24" aria-hidden="true">
      {ICONS[id](PALETTE[k], k)}
    </IconSvg>
  );
};

// ---------- window frame ----------
const Window = styled.div`
  display: flex;
  flex-direction: column;
  height: 100vh;
  overflow: hidden;
  background: linear-gradient(90deg, #e8ebfa, #f2f6ff);
`;
const TitleBar = styled.header`
  display: flex;
  align-items: center;
  flex: none;
  height: 23px;
  padding: 0 19px 0 3px;
  gap: 4px;
  background: #fff;
  color: #8c8c8c;
`;
const Title = styled.h1`
  flex: 1;
  margin: 0;
  font-size: 12px;
  font-weight: 400;
  white-space: nowrap;
`;
const WindowButton = styled.button`
  display: flex;
  padding: 0;
  border: 0;
  margin-left: 30px;
  background: none;
`;
const TopShadow = styled.div`
  position: absolute;
  top: -6px;
  left: 1434px;
  width: 286px;
  height: 6px;
  box-shadow: 0 0 4px 2px #909090;
`;
const MenuBar = styled.nav`
  display: flex;
  align-items: center;
  flex: none;
  height: 37px;
  padding: 0 8px 2px 4px;
`;
const Grip = styled.span`
  flex: none;
  align-self: center;
  width: 3px;
  height: 24px;
  margin: 0 2px;
  background: repeating-linear-gradient(#a4acc4 0 2px, transparent 2px 4px);
`;
const MenuItem = styled.button`
  padding: 0 8px 0 9px;
  border: 0;
  background: none;
  white-space: nowrap;
`;
const MenuStatus = styled.div`
  display: flex;
  align-items: center;
  gap: 8px;
  margin-left: auto;
`;
const StatusGroup = styled.div`
  display: flex;
  align-items: center;
  gap: 4px;
  white-space: nowrap;
  padding-right: ${(p) => p.$pad || 0}px;
`;
const Rows = styled.div`
  display: flex;
  flex-direction: column;
  flex: none;
  gap: 2px;
  padding: 0 3px 2px;
`;
const Row = styled.div`
  display: flex;
  gap: 4px;
`;

// ---------- toolbar ----------
const Bar = styled.div`
  display: flex;
  align-items: center;
  flex: none;
  height: 34px;
  margin-left: ${(p) => p.$indent || 0}px;
  border-radius: 3px;
  background: linear-gradient(#fafafd, #e6e8f0 50%, #c2c9da);
  border-bottom: 1px solid #b4bed2;
`;
const Tool = styled.button`
  display: flex;
  align-items: center;
  justify-content: center;
  gap: 2px;
  flex: none;
  width: ${(p) => p.$w}px;
  height: 32px;
  padding: 0;
  border: 0;
  background: none;
  ${(p) =>
    p.$active &&
    css`
      border: 1px solid #2c7fb4;
      background: linear-gradient(#c4e2f2, #8cc4e0);
    `}
`;
const ToolArrow = styled.button`
  flex: none;
  width: 10px;
  padding: 0;
  border: 0;
  background: none;
  line-height: 0;
`;
const Separator = styled.span`
  flex: none;
  width: 1px;
  height: 24px;
  margin: 0 3px 0 2px;
  background: #98a0b4;
`;
const Overflow = styled.button`
  display: flex;
  align-items: flex-end;
  justify-content: center;
  align-self: stretch;
  flex: none;
  width: 11px;
  margin-left: ${(p) => p.$gap ?? 1}px;
  padding: 0 0 3px;
  border: 0;
  border-radius: 0 3px 3px 0;
  background: linear-gradient(#c8cede, #b8c1d5);
`;
const Label = styled.label`
  padding: 0 4px;
  white-space: nowrap;
`;
const CountInput = styled.input`
  width: 49px;
  height: 24px;
  margin: 0 1px 0 9px;
  padding: 0 3px;
  border: 1px solid #808080;
  background: #f0f0f0;
  color: #808080;
`;
const Combo = styled.span`
  display: grid;
  align-items: center;
  flex: none;
  width: ${(p) => p.$w}px;
  height: 26px;
  margin-right: 3px;
  border: 1px solid ${(p) => (p.$off ? "#a0a0a0" : "#f4f6fa")};
  background: ${(p) => (p.$off ? "#ececec" : "#fff")};
  color: ${(p) => (p.$off ? "#808080" : "#000")};
  > * {
    grid-area: 1 / 1;
  }
  svg {
    justify-self: end;
    margin-right: 3px;
    pointer-events: none;
  }
`;
const Select = styled.select`
  appearance: none;
  width: 100%;
  height: 100%;
  padding: 0 2px;
  border: 0;
  background: none;
  opacity: 1;
`;

const Down = ({ c = "#000" }) => (
  <svg width="8" height="5" aria-hidden="true">
    <path d="M0 0h8l-4 5z" fill={c} />
  </svg>
);
const SmallDown = () => (
  <svg width="6" height="4" aria-hidden="true">
    <path d="M0 0h6l-3 4z" />
  </svg>
);

const ComboBox = ({ label, value, w, off }) => (
  <Combo $w={w} $off={off}>
    <Select aria-label={label} disabled={off} defaultValue={value}>
      <option>{value}</option>
    </Select>
    <Down c={off ? "#808080" : "#000"} />
  </Combo>
);

// "|" is a separator, a leading "*" is a pressed button, a trailing ">" adds a drop-down arrow
const Tools = ({ items, w = 32 }) =>
  items.split(" ").map((raw, i) => {
    if (raw === "|") return <Separator key={i} />;
    const name = raw.replace(/[*>]/g, "");
    const tool = (
      <Tool key={i} $w={w} $active={raw[0] === "*"} aria-label={name}>
        <Icon name={name} />
      </Tool>
    );
    if (!raw.endsWith(">")) return tool;
    return [
      tool,
      <ToolArrow key={i + "a"} aria-label={name + " options"}>
        <SmallDown />
      </ToolArrow>,
    ];
  });

const ToolBar = ({ items, w, indent, gap, children }) => (
  <Bar $indent={indent}>
    <Grip />
    {children}
    {items && <Tools items={items} w={w} />}
    <Overflow $gap={gap} aria-label="toolbar options">
      <svg width="7" height="7" aria-hidden="true">
        <path d="M1 0h5v1h-5zM0 3h7l-3.5 4z" />
      </svg>
    </Overflow>
  </Bar>
);

const shapes = (k, names) => names.split(" ").map((n) => `${n}:${k}`).join(" ");

// ---------- panes ----------
const Panes = styled.main`
  display: grid;
  grid-template-columns: minmax(400px, 604px) 1fr;
  gap: 4px;
  flex: 1;
  min-height: 0;
  background: #f0f0f0;
`;
const LeftPane = styled.section`
  display: flex;
  flex-direction: column;
  min-height: 0;
`;
const LeftBar = styled(Bar)`
  height: 35px;
  padding-left: 4px;
  border-bottom: 1px solid #b4c0d8;
`;
const Tree = styled.div`
  flex: 1;
  min-height: 0;
  overflow: hidden;
  background: #c8c8c8;
`;
const TreeRow = styled.div`
  display: grid;
  grid-template-columns: 22px 22px 1fr 22px 24px;
  height: 22px;
  border-bottom: 1px solid #dedede;
  background: ${(p) => (p.$selected ? "#6496c8" : "transparent")};
  color: ${(p) => (p.$selected ? "#f0f0f0" : "#000")};
`;
const TreeMark = styled.span`
  display: flex;
  align-items: center;
  justify-content: center;
  border-right: ${(p) => (p.$end ? 0 : 1)}px solid #dedede;
  border-left: ${(p) => (p.$end ? 1 : 0)}px solid #dedede;
  &:last-child {
    border-right: 1px solid #dedede;
  }
`;
const TreeCell = styled.span`
  display: flex;
  align-items: center;
  gap: 3px;
  white-space: nowrap;
`;
const TreeText = styled.span`
  line-height: 16px;
  padding-bottom: 3px;
`;
const Branch = styled.svg`
  display: block;
  flex: none;
  margin-right: -3px;
`;
const Tabs = styled.div`
  display: flex;
  flex: none;
  height: 23px;
  border-top: 2px solid #fff;
  box-shadow: inset 0 1px #8c8c8c;
  padding-left: 2px;
`;
const Tab = styled.button`
  height: 19px;
  padding: 0 6px 0 5px;
  border: 0;
  border-right: 1px solid #a8a8a8;
  background: none;
  color: #646464;
  line-height: 18px;
  &:last-child {
    border-right: 0;
  }
  ${(p) =>
    p.$active &&
    css`
      padding: 0 5px;
      border: 1px solid #8c8c8c;
      border-top: 0;
      border-radius: 0 0 3px 3px;
      background: #fff;
      color: #000;
    `}
`;
const RightPane = styled.section`
  display: grid;
  grid-template-columns: 1fr 3px;
  min-height: 0;
  background: #000;
`;
const ViewFrame = styled.div`
  display: flex;
  flex-direction: column;
  min-width: 0;
  border-top: 1px solid #6c6c6c;
  border-left: 3px solid #6c6c6c;
  border-right: 3px solid #f4f4f4;
  background: #d6e4fa;
`;
const ViewBody = styled.div`
  display: flex;
  flex-direction: column;
  flex: 1;
  min-height: 0;
  border: 1px solid #3460a4;
  border-top-width: 2px;
`;
const ViewBar = styled(Bar)`
  height: 35px;
  padding-left: 6px;
  border-radius: 0;
`;
const Canvas = styled.div`
  position: relative;
  flex: 1;
  min-height: 0;
  overflow: hidden;
  background: linear-gradient(#c0c0c0, #fffbee);
`;
const Model = styled.svg`
  position: absolute;
  left: 288px;
  top: 364px;
`;
const Triad = styled.svg`
  position: absolute;
  left: 30px;
  bottom: 59px;
`;
const Scale = styled.div`
  position: absolute;
  right: 50px;
  bottom: 62px;
  display: flex;
  flex-direction: column;
  width: 20px;
  height: 170px;
  border: 1px solid #000;
`;
const Swatch = styled.span`
  flex: 1;
  background: ${(p) => p.$c};
  & + & {
    border-top: 1px solid #000;
  }
`;
const ViewTabs = styled.div`
  display: flex;
  flex: none;
  height: 22px;
  background: linear-gradient(#fafcff, #c4d9f8);
`;
const ViewTab = styled.button`
  height: 19px;
  padding: 0 6px;
  border: 0;
  background: none;
  line-height: 18px;
  ${(p) =>
    p.$active &&
    css`
      border: 1px solid #3460a4;
      border-top: 0;
      border-radius: 0 0 4px 4px;
      background: linear-gradient(#c8c8c8, #f4f8ff);
    `}
`;

const TREE = [
  { text: "MAIN", root: true, bulb: "off", grid: "on" },
  { text: "初始化", icon: "tInit" },
  { text: "清空报告", icon: "tBin" },
  { text: "MAN", icon: "tMode" },
  { text: "D2L40_A0B0", icon: "probe" },
  { text: "平面1", icon: "plane:blue", bulb: "off", grid: "off" },
  { text: "直线1", icon: "line:blue", bulb: "off", grid: "off" },
  { text: "点1", icon: "tStar", bulb: "off", grid: "off" },
  { text: "坐标系1", icon: "tCs" },
  { text: "AUTO", icon: "tMode" },
  { text: "测头参数", icon: "report" },
  { text: "安全平面(ZDIR,10.0000,ZDIR,10.0000,ON)", icon: "tSafe" },
  { text: "平面2", icon: "plane:blue", bulb: "off" },
  { text: "直线2", icon: "line:blue", bulb: "off" },
  { text: "直线3", icon: "line:blue", bulb: "off" },
  { text: "点2", icon: "point:gold", bulb: "off" },
  { text: "坐标系2", icon: "tCs" },
  { text: "安全平面(ZDIR,20.0000,ZDIR,10.0000,ON)", icon: "tSafe" },
  { text: "圆1", icon: "circle:blue", bulb: "on" },
  { text: "安全平面(-YDIR,-20.0000,ZDIR,80.0000,ON)", icon: "tSafe" },
  { text: "安全平面(MOVE/CLEARPLANE)", icon: "tSafeMove" },
  { text: "A90B180", icon: "probe" },
  { text: "提示信息 (山涧果子)", icon: "tNote" },
  { text: "圆2", icon: "circle:blue", bulb: "on", grid: "on" },
  { text: "安全平面(MOVE/CLEARPLANE)", icon: "tSafeMove" },
  { text: "路径", icon: "tRoute", open: true },
  { text: "GOTO/INCR,200.000000,0.000000,0.000000,1.000000", leaf: true },
  { text: "A0B0", icon: "probe", selected: true },
];

const Bulb = ({ on }) => (
  <svg width="14" height="16" viewBox="0 0 14 16" aria-hidden="true">
    {on && <path d="M7 0v2M2 3l1 1M12 3l-1 1M0 7h2M12 7h2M2 11l1 -1M12 11l-1 -1" stroke="#c82020" />}
    <circle cx="7" cy="6.500" r="3.500" fill={on ? "#f07070" : "#aca8a0"} />
    <path d="M4 8h6l-1 4h-4z" fill={on ? "#e06050" : "#c8c4b0"} />
    <path d="M5 12h4l-1 4h-2z" fill="#404020" />
  </svg>
);

const MiniGrid = ({ on }) => (
  <svg width="16" height="11" aria-hidden="true">
    <rect x=".5" y=".5" width="15" height="10" fill={on ? "#ecd4ff" : "#e4e4e4"} stroke={on ? "#8840c8" : "#a8a8a8"} />
    <path d="M1 3.500h14" stroke={on ? "#8840c8" : "#a8a8a8"} />
    <path d="M2 5.500h12M2 7.500h12" stroke={on ? "#181818" : "#888"} strokeDasharray="3 1" />
  </svg>
);

const MinusBox = ({ x }) => (
  <g>
    <rect x={x + 0.5} y="5.5" width="10" height="10" rx="1" fill="#f4f6fc" stroke="#7088b0" />
    <path d={`M${x + 3} 10.5h5`} stroke="#203060" />
  </g>
);

// tree lines in front of each row
const Connector = ({ row }) => {
  if (row.root)
    return (
      <Branch width="21" height="21">
        <MinusBox x={5} />
      </Branch>
    );
  if (row.open)
    return (
      <Branch width="27" height="21">
        <path d="M6.5 0v21M7 11.5h4" stroke="#000" />
        <MinusBox x={11} />
      </Branch>
    );
  if (row.leaf)
    return (
      <Branch width="31" height="21">
        <path d="M6.5 0v21M12.5 0v11.5h7" stroke="#000" fill="none" />
      </Branch>
    );
  return (
    <Branch width="25" height="21">
      <path d={row.selected ? "M6.5 0v11.5h7" : "M6.5 0v21M7 11.5h7"} stroke={row.selected ? "#fff" : "#000"} fill="none" />
    </Branch>
  );
};

// one round pocket in the front face
const Pocket = ({ x, y }) => (
  <g transform={`translate(${x} ${y})`}>
    <path d="M992 665C1040 668 1058 750 1022 805C985 865 900 880 858 820C930 835 985 790 985 740Z" fill="url(#hole)" />
    <path d="M920 683L970 720C925 725 905 750 913 790L867 742Z" fill="#c89000" />
    <path d="M920 683L970 720C945 722 930 728 922 738L896 708Z" fill="#6a4c00" />
  </g>
);

const Tag = ({ x, y, w, h, text }) => (
  <g>
    <rect x={x} y={y} width={w} height={h} fill="#fff" stroke="#000" strokeWidth="3" />
    <rect x={x + 2} y={y + 2} width={w - 4} height="8" fill="#00c000" />
    <circle cx={x + 27} cy={y + 37} r="18" fill="none" stroke="#5878b8" strokeWidth="5" />
    <text x={x + 66} y={y + 51} fontSize="38" fontFamily="Liberation Mono, Noto Sans CJK SC, monospace">{text}</text>
  </g>
);

const HOLES = [[544, 372], [745, 396], [454, 444], [854, 492], [563, 540], [763, 564]];

const Part = () => (
  <Model width="460" height="340" viewBox="0 0 1380 1020" role="img" aria-label="CAD model">
    <path d="M600 72L635 100L600 98Z" fill="#e0a000" />
    <path d="M1165 580L1245 640L1282 570L1240 785Q1232 802 1208 810L1125 823L1113 877Z" fill="url(#side)" />
    <path d="M632 98L710 165Q770 182 845 182L1282 570L1268 600Q1245 620 1250 645Q1215 630 1165 585L575 102Z" fill="url(#slab)" />
    <path d="M1282 570L1268 640L1250 640Q1240 590 1282 570Z" fill="#5c4200" />
    <path d="M152 122L527 60L575 102L632 98L1165 585L553 685L178 357Z" fill="#785800" />
    <path d="M152 122L178 357L162 455L150 380L135 467L140 555L125 652L99 410Z" fill="#b98600" />
    <ellipse cx="135" cy="357" rx="10" ry="55" fill="url(#hole)" />
    <path d="M178 357L553 685L527 778L605 773L592 868L135 467L150 380L162 455Z" fill="#f0b000" />
    <path d="M135 467L592 868L515 880L140 555Z" fill="#755500" />
    <path d="M140 555L510 878L495 975L125 652Z" fill="#f0b000" />
    <path d="M562 684L1165 585L1113 877L515 977L530 880L592 868L605 773L547 780Z" fill="#755500" />
    <path d="M553 685L565 684L547 780L525 777L535 680Z" fill="url(#edge)" />
    <path d="M508 876L532 880L518 977L493 975Z" fill="url(#edge)" />
    <ellipse cx="525" cy="157" rx="100" ry="48" transform="rotate(6 525 157)" fill="url(#hole)" />
    <path d="M485 190Q520 180 565 206Q520 208 485 190Z" fill="#6a4c00" />
    <path d="M380 238L706 305" stroke="url(#slot)" strokeWidth="56" strokeLinecap="round" />
    <path d="M248 290L340 276L395 325L318 345Z" fill="url(#hole)" />
    <path d="M248 290L323 279L308 343Z" fill="#6a4c00" />
    {HOLES.map(([x, y]) => (
      <ellipse key={x} cx={x} cy={y} rx="55" ry="27" transform={`rotate(5 ${x} ${y})`} fill="url(#hole)" />
    ))}
    <ellipse cx="970" cy="541" rx="38" ry="19" fill="url(#hole)" />
    <ellipse cx="653" cy="468" rx="111" ry="53" transform="rotate(6 653 468)" fill="url(#hole)" />
    <path d="M570 470Q650 440 735 520Q640 540 570 470Z" fill="#785800" />
    <path d="M546 462Q600 435 670 446T757 502" fill="none" stroke="#00ff00" strokeWidth="3" />
    <Pocket x={0} y={0} />
    <Pocket x={-224} y={37} />
    <path d="M790 708C815 760 800 830 745 865Q690 895 640 875" fill="none" stroke="#00ff00" strokeWidth="3" />
    <Tag x={566} y={459} w={164} h={67} text="圆 1" />
    <Tag x={623} y={743} w={167} h={71} text="圆 2" />
    <g strokeWidth="4">
      <path d="M553 685L322 482M553 685L620 315M553 685L905 627" stroke="#d81850" />
      <path d="M553 685L405 558M553 685L595 460M553 685L770 650" stroke="#2848c8" strokeDasharray="8 4" />
    </g>
    <path d="M318 480L360 502L345 520ZM915 627L858 642L856 622Z" fill="#801030" />
    <path d="M622 305L624 368L602 366Z" fill="#e02860" />
    <path d="M400 552L425 562L414 574ZM785 648L756 657L755 645ZM597 440L600 475L586 474Z" fill="#2048c0" />
    <g fontFamily="Liberation Sans, sans-serif" fontSize="54" textAnchor="middle">
      <g fill="#ff2060">
        <text x="617" y="292">Z</text>
        <text x="309" y="469">Y</text>
        <text x="914" y="616">X</text>
      </g>
      <g fill="#2468f8">
        <text x="593" y="422">Z</text>
        <text x="387" y="537">Y</text>
        <text x="793" y="638">X</text>
      </g>
    </g>
  </Model>
);

const ViewTriad = () => (
  <Triad width="80" height="64" aria-hidden="true">
    <path d="M35 60l4 -22" stroke="#c81010" strokeWidth="2" />
    <path d="M36 42l5 -14v16z" fill="#c81010" />
    <path d="M35 60l-14 -14" stroke="#107010" strokeWidth="2" />
    <path d="M14 42l10 4l-5 6z" fill="#107010" />
    <path d="M35 60l20 -4" stroke="#1850f0" strokeWidth="2" />
    <path d="M66 54l-11 -2l2 7z" fill="#1850f0" />
    <g fontFamily="Liberation Sans, sans-serif" fontSize="18" textAnchor="middle">
      <text x="40" y="18" fill="#c81010">Z</text>
      <text x="9" y="35" fill="#107010">Y</text>
      <text x="70" y="51" fill="#1860f8">X</text>
    </g>
  </Triad>
);

const SCALE = ["#ff0000", "#ff5500", "#ffaa00", "#ffff00", "#aaff00", "#00ff00", "#00ffaa", "#00ffff", "#00aaff", "#0055ff", "#0000ff"];

// ---------- note dialog ----------
const Dialog = styled.form`
  position: absolute;
  left: 490px;
  top: 431px;
  width: 359px;
  height: 237px;
  border: 1px solid #78b4ec;
  background: #f0f0f0;
  box-shadow: 2px 4px 14px rgba(0, 0, 0, 0.35);
  font-family: "Noto Sans CJK SC", sans-serif;
`;
const DialogTitle = styled.div`
  display: flex;
  align-items: center;
  justify-content: space-between;
  height: 25px;
  padding: 0 9px 2px 3px;
  background: #fff;
`;
const DialogClose = styled.button`
  display: flex;
  padding: 0;
  border: 0;
  background: none;
`;
const DialogBody = styled.div`
  display: grid;
  grid-template-columns: 126px 176px;
  column-gap: 28px;
  padding: 20px 14px 0;
`;
const Group = styled.fieldset`
  display: flex;
  flex-direction: column;
  gap: 25px;
  height: 139px;
  margin: 0;
  padding: 21px 15px 0;
  border: 1px solid #dcdcdc;
`;
const Legend = styled.legend`
  margin-left: -10px;
  padding: 0 2px;
  line-height: 16px;
`;
const Option = styled.label`
  display: flex;
  align-items: center;
  gap: 3px;
  line-height: 18px;
`;
const Radio = styled.input`
  appearance: none;
  width: 13px;
  height: 13px;
  border: 1px solid #333;
  border-radius: 50%;
  background: #fff;
  &:checked {
    background: radial-gradient(#333 0 3px, #fff 4px);
  }
`;
const Field = styled.label`
  display: flex;
  flex-direction: column;
  gap: 3px;
  line-height: 16px;
  text-indent: 2px;
`;
const NoteText = styled.textarea`
  height: 120px;
  padding: 0 3px;
  border: 1px solid #0078d7;
  border-radius: 0;
  background: #fff;
  outline: 0;
  resize: none;
  line-height: 18px;
`;
const DialogButtons = styled.div`
  display: flex;
  gap: 35px;
  padding: 19px 0 0 76px;
`;
const DialogButton = styled.button`
  width: 73px;
  height: 21px;
  padding: 0;
  border: ${(p) => (p.$main ? "2px solid #0078d7" : "1px solid #adadad")};
  background: #e1e1e1;
  line-height: 17px;
`;

const NoteDialog = () => {
  const [kind, setKind] = useState("报告");
  const [note, setNote] = useState("圆1孔是重点管控");
  return (
    <Dialog onSubmit={(e) => e.preventDefault()}>
      <DialogTitle>
        注释
        <DialogClose type="button" aria-label="close">
          <svg width="11" height="11" aria-hidden="true">
            <path d="M0 0l11 11M11 0l-11 11" stroke="#000" />
          </svg>
        </DialogClose>
      </DialogTitle>
      <DialogBody>
        <Group>
          <Legend>注释类型</Legend>
          {["报告", "提示信息"].map((el) => (
            <Option key={el}>
              <Radio type="radio" name="kind" checked={kind === el} onChange={() => setKind(el)} />
              {el}
            </Option>
          ))}
        </Group>
        <Field>
          注释内容
          <NoteText value={note} onChange={(e) => setNote(e.target.value)} />
        </Field>
      </DialogBody>
      <DialogButtons>
        <DialogButton $main>确定</DialogButton>
        <DialogButton type="button">退出</DialogButton>
      </DialogButtons>
    </Dialog>
  );
};

// ---------- status bar ----------
const StatusBar = styled.footer`
  display: flex;
  align-items: flex-start;
  flex: none;
  height: 21px;
  padding: 3px 0 0 3px;
  overflow: hidden;
  border-top: 1px solid #d4d4d4;
  background: #f0f0f0;
`;
const StatusRight = styled.div`
  display: flex;
  gap: 1px;
  margin-left: auto;
  font-family: "Liberation Sans", sans-serif;
  font-size: 14px;
  font-weight: 700;
  line-height: 16px;
`;
const StatusIcon = styled.span`
  padding-right: 9px;
`;
const AxisName = styled.span`
  width: 15px;
  text-align: center;
`;
const Readout = styled.output`
  width: 79px;
  height: 17px;
  padding-right: 3px;
  border: 1px solid #fff;
  border-right-color: #707070;
  border-bottom-color: #707070;
  outline: 1px solid #a8a8a8;
  outline-offset: -1px;
  background: #ececec;
  text-align: right;
`;
const StatusCombo = styled(Combo)`
  height: 20px;
  margin: 0;
  border: 1px solid #c4c4c4;
  background: #e6e6e6;
`;

// ---------- floating widgets ----------
const InputBar = styled.div`
  position: absolute;
  left: 984px;
  bottom: -2px;
  display: flex;
  align-items: center;
  gap: 8px;
  height: 27px;
  padding: 0 4px 0 21px;
  border: 1px solid #b8cce8;
  background: #fff;
`;
const InputButton = styled.button`
  width: 16px;
  height: 20px;
  padding: 0;
  border: 0;
  background: none;
  color: #0a6cd8;
  font-weight: 700;
  font-size: 15px;
  line-height: 16px;
`;
const InputLogo = styled.svg`
  position: absolute;
  left: -18px;
  top: -6px;
`;
const Monitor = styled.div`
  position: absolute;
  left: 1404px;
  bottom: 14px;
  display: flex;
  align-items: center;
  gap: 7px;
  height: 40px;
  padding: 0 8px 0 36px;
  border-radius: 0 20px 20px 0;
  background: #f8f9fb;
  box-shadow: 0 0 3px rgba(0, 0, 0, 0.3);
  font-size: 10px;
  line-height: 18px;
`;
const MonitorRing = styled.svg`
  position: absolute;
  left: -34px;
  top: -16px;
`;
const Stats = styled.div`
  display: flex;
  flex-direction: column;
  width: 48px;
`;
const Stat = styled.span`
  display: flex;
  align-items: center;
  justify-content: space-between;
  white-space: nowrap;
  color: ${(p) => p.$c || "#222"};
`;
const Plus = styled.button`
  width: 16px;
  height: 16px;
  padding: 0;
  border: 0;
  border-radius: 50%;
  background: #2f90f8;
  line-height: 0;
`;
const Watermark = styled.div`
  position: absolute;
  right: 15px;
  bottom: 6px;
  color: #a0a0a0;
  font-size: 18px;
  line-height: 24px;
  text-shadow: 1px 1px #fff;
`;

const MENUS = ["文件(F)", "测头(P)", "坐标系(C)", "基本测量(M)", "公差(T)", "编程系统(E)", "报告(R)", "专用软件(O)", "环境设置(S)", "视图(W)", "帮助(H)"];

export default () => {
  const [points, setPoints] = useState("0");

  return (
    <Window>
      <GlobalStyle />
      <Defs />
      <TitleBar>
        <svg width="17" height="17" aria-hidden="true">
          <path d="M2 10l3 -9l4 6l3 -6l-1 8" fill="none" stroke="#f09020" strokeWidth="2" />
          {word("DMIS", 1, 16, 6, "#206080")}
        </svg>
        <Title>NET.DMIS (x64) - [C:\DE\NET.DMIS-DATA\山涧果子2023\山涧果子2023.xwrk-脱机][精度校验过期]</Title>
        <WindowButton aria-label="minimize">
          <svg width="11" height="11"><path d="M0 5.5h11" stroke="#888" /></svg>
        </WindowButton>
        <WindowButton aria-label="restore">
          <svg width="11" height="11"><path d="M.5 2.5h7v8h-7zM2.500 2v-1.500h8v8h-2.500" fill="none" stroke="#888" /></svg>
        </WindowButton>
        <WindowButton aria-label="close">
          <svg width="11" height="11"><path d="M0 0l11 11M11 0l-11 11" stroke="#888" /></svg>
        </WindowButton>
      </TitleBar>
      <TopShadow />

      <MenuBar>
        <Grip />
        {MENUS.map((el) => (
          <MenuItem key={el}>{el}</MenuItem>
        ))}
        <MenuStatus>
          <StatusGroup>
            <Icon name="probe" />
            <SmallDown />
            <StatusGroup>D2L40&nbsp;&nbsp; A90B180</StatusGroup>
            <Separator />
            <Icon name="csOpen" />
          </StatusGroup>
          <StatusGroup $pad={12}>坐标系2</StatusGroup>
          <Separator />
          <Icon name="thermo" size={28} />
          <Separator />
          <Icon name="computer" size={32} />
        </MenuStatus>
      </MenuBar>

      <Rows>
        <Row>
          <ToolBar gap={0}>
            <Label htmlFor="points">测点数</Label>
            <CountInput id="points" value={points} onChange={(e) => setPoints(e.target.value)} />
            <Tools items="erase" w={23} />
            <Tools items="eraseAll" w={30} />
          </ToolBar>
          <ToolBar items="runner joystick next xyz report home warning" gap={2} />
          <ToolBar>
            <Label>辅助功能</Label>
            <ComboBox label="辅助功能" value="无" w={76} />
            <ComboBox label="辅助对象" value="" w={76} />
            <Tools items="lock" w={28} />
          </ToolBar>
          <ToolBar
            indent={8}
            gap={5}
            w={31}
            items="broom *move zoomRect zoomPlus rotate> zoomMove cube> *shade> pickFace pickEdge pickPoint> pickAny frame listBox camera spinXY probeEye>"
          />
        </Row>
        <Row>
          <ToolBar items={shapes("red", "point line circle arc ellipse plane rect slot cylinder sphere cone torus strips surface squareTool help path")} />
          <ToolBar items={shapes("blue", "point line circle arc ellipse plane rect slot cylinder sphere cone torus axisBox flatA flatB groove hex funnel")} />
          <ToolBar gap={2} items={shapes("gold", "point line circle ellipse plane rect slot cylinder sphere cone surfaceDots surface cross fourDots")} />
        </Row>
        <Row>
          <ToolBar items="init csOpen | csBox | csArc rps csCyl csHalf csPlate | csScale csSpin | *csView *csView2" />
          <ToolBar items="cadReport:gold cad1 cad2 cad3 cad4 cad5 cad1 cad7 cad8 cad9" />
          <ToolBar gap={2} items="cadReport:red uv mesh shell shellQ" />
          <ToolBar
            items="ruler | straight flat round cylindric profileL profileS | parallel perp angle concentric coaxial symmetry runout2 runout position positions | theta dist | rulerT"
          />
        </Row>
      </Rows>

      <Panes>
        <LeftPane>
          <LeftBar>
            <Tools items="exec stop | steps unlock winBall ballDel ballDown" />
            <ComboBox label="运行模式" value="AUTO" w={65} />
          </LeftBar>
          <Tree role="tree">
            {TREE.map((el, index) => (
              <TreeRow key={index} role="treeitem" $selected={el.selected}>
                <TreeMark>
                  {el.selected && (
                    <svg width="16" height="12" aria-hidden="true">
                      <path d="M1 4.500h8v-4l6 5.500l-6 5.500v-4h-8z" fill="#ffff00" stroke="#e00000" />
                      <path d="M9 3l4 3l-4 3z" fill="#10c020" />
                    </svg>
                  )}
                </TreeMark>
                <TreeMark>{el.bulb && <Bulb on={el.bulb === "on"} />}</TreeMark>
                <TreeCell>
                  <Connector row={el} />
                  {el.icon && <Icon name={el.icon} size={18} />}
                  <TreeText>{el.text}</TreeText>
                </TreeCell>
                <TreeMark $end>{el.grid && <MiniGrid on={el.grid === "on"} />}</TreeMark>
                <TreeMark $end />
              </TreeRow>
            ))}
          </Tree>
          <Tabs>
            <Tab $active>节点程序</Tab>
            <Tab>模型管理</Tab>
            <Tab>DMIS程序</Tab>
            <Tab>测量结果</Tab>
          </Tabs>
        </LeftPane>

        <RightPane>
          <ViewFrame>
            <ViewBody>
              <ViewBar>
                <Tools items="gearEye | diskPage prev" />
                <ComboBox label="页" value="1" w={37} off />
                <Tools items="fwd newPage gearPage | *grids gridCursor gridStar> | dTable dTableCursor | *gridsGreen | gearGrid |" />
                <ComboBox label="视图" value="VIEW" w={68} />
                <Tools items="diskEye | pageLens" />
              </ViewBar>
              <Canvas>
                <Part />
                <ViewTriad />
                <Scale>
                  {SCALE.map((c) => (
                    <Swatch key={c} $c={c} />
                  ))}
                </Scale>
              </Canvas>
            </ViewBody>
            <ViewTabs>
              <ViewTab $active>CAD</ViewTab>
              <ViewTab>报告窗口</ViewTab>
            </ViewTabs>
          </ViewFrame>
        </RightPane>
      </Panes>

      <StatusBar>
        Ready
        <StatusRight>
          <StatusIcon>
            <Icon name="axes" size={18} />
          </StatusIcon>
          <AxisName>X</AxisName>
          <Readout>-550.4995</Readout>
          <AxisName>Y</AxisName>
          <Readout>989.1500</Readout>
          <AxisName>Z</AxisName>
          <Readout>970.0000</Readout>
          <Readout>mm</Readout>
          {[["角度单位", "Degree", 91], ["坐标", "Cart-XY", 75], ["测头", "Prob-On", 74]].map(([label, value, w]) => (
            <StatusCombo key={label} $w={w}>
              <Select aria-label={label} defaultValue={value}>
                <option>{value}</option>
              </Select>
              <svg width="9" height="6" aria-hidden="true">
                <path d="M0 0l4.500 5l4.500 -5" fill="none" stroke="#505050" />
              </svg>
            </StatusCombo>
          ))}
        </StatusRight>
      </StatusBar>

      <NoteDialog />

      <InputBar>
        <InputLogo width="34" height="34" aria-hidden="true">
          <rect x="4" y="4" width="27" height="27" rx="3" transform="rotate(-12 17 17)" fill="#f4541c" />
          <text x="17" y="27" textAnchor="middle" fontSize="28" fontWeight="700" fill="#fff" fontFamily="Liberation Sans, sans-serif" transform="rotate(-8 17 17)">S</text>
        </InputLogo>
        <InputButton>中</InputButton>
        <InputButton>°,</InputButton>
        <InputButton aria-label="voice">
          <svg width="14" height="18">
            <rect x="4" y="1" width="6" height="10" rx="3" fill="#0a6cd8" />
            <path d="M1 8q0 6 6 6t6 -6M7 14v3M4 17h6" fill="none" stroke="#0a6cd8" strokeWidth="2" />
          </svg>
        </InputButton>
        <InputButton aria-label="keyboard">
          <svg width="16" height="14">
            <rect x="1" y="2" width="14" height="11" rx="1" fill="none" stroke="#0a6cd8" strokeWidth="2" />
            <path d="M3 5.500h10M3 8.500h10" stroke="#0a6cd8" strokeWidth="2" strokeDasharray="2 1" />
            <path d="M5 11h6" stroke="#0a6cd8" />
          </svg>
        </InputButton>
        <InputButton aria-label="skin">
          <svg width="16" height="16">
            <path d="M1 2l4 -1q3 3 6 0l4 1v5h-3v8h-8v-8h-3z" fill="#6464e8" />
          </svg>
        </InputButton>
        <InputButton aria-label="toolbox">
          <svg width="14" height="14" fill="#0a6cd8">
            <rect width="6" height="6" rx="1" />
            <circle cx="11" cy="3" r="2" fill="none" stroke="#0a6cd8" strokeWidth="2" />
            <rect y="8" width="6" height="6" rx="1" />
            <rect x="8" y="8" width="6" height="6" rx="1" />
          </svg>
        </InputButton>
      </InputBar>

      <Watermark>CSDN @山涧果子</Watermark>

      <Monitor>
        <MonitorRing width="68" height="70" role="img" aria-label="70%">
          <ellipse cx="28" cy="28" rx="23" ry="26" fill="#78e098" />
          <ellipse cx="37" cy="38" rx="29" ry="29" fill="#58d880" />
          <ellipse cx="31" cy="43" rx="29" ry="26" fill="#68dc8c" />
          <circle cx="34" cy="36" r="27" fill="#f6f6f8" stroke="#28d060" strokeWidth="4" />
          <text x="17" y="43" fontSize="22" fill="#484848" fontFamily="Lato, sans-serif" fontWeight="300">
            70<tspan fontSize="13">%</tspan>
          </text>
        </MonitorRing>
        <Stats>
          <Stat>
            <svg width="7" height="8" aria-hidden="true">
              <path d="M3.500 0v7M.5 4l3 3l3 -3" fill="none" stroke="#18b040" />
            </svg>
            0.7K/s
          </Stat>
          <Stat $c="#707070">
            CPU <Stat $c="#20d060">43°C</Stat>
          </Stat>
        </Stats>
        <Plus aria-label="speed up">
          <svg width="8" height="8" aria-hidden="true">
            <path d="M4 0v8M0 4h8" stroke="#fff" strokeWidth="2" />
          </svg>
        </Plus>
      </Monitor>
    </Window>
  );
};
